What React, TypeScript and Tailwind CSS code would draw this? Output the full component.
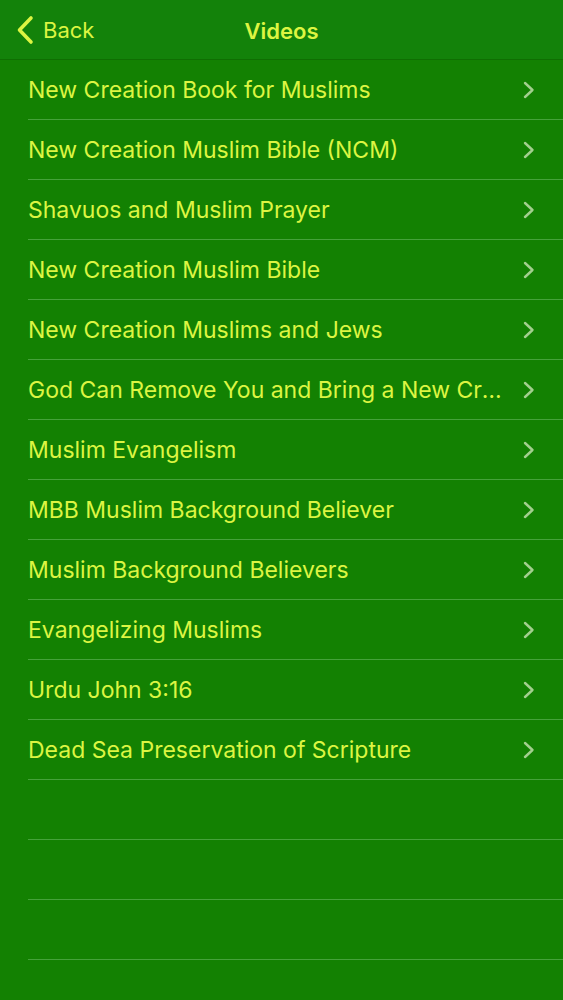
import React from "react";

const items = [
  "New Creation Book for Muslims",
  "New Creation Muslim Bible (NCM)",
  "Shavuos and Muslim Prayer",
  "New Creation Muslim Bible",
  "New Creation Muslims and Jews",
  "God Can Remove You and Bring a New Creation",
  "Muslim Evangelism",
  "MBB Muslim Background Believer",
  "Muslim Background Believers",
  "Evangelizing Muslims",
  "Urdu John 3:16",
  "Dead Sea Preservation of Scripture",
];

function Chevron() {
  return (
    <svg width="12" height="18" viewBox="0 0 12 18" fill="none">
      <path d="M2 2 L9.5 9 L2 16" stroke="#a3cf8e" strokeWidth="2.4" strokeLinecap="round" strokeLinejoin="round" />
    </svg>
  );
}

export default function App() {
  return (
    <div
      className="w-[563px] h-[1000px] overflow-hidden bg-[#138102] text-[#dcf542]"
      style={{ fontFamily: "Inter, 'Liberation Sans', sans-serif" }}
    >
      <div className="relative h-[60px] flex items-center border-b border-[#0f6e02] bg-[#13820a]">
        <div className="flex items-center pl-[16px] gap-[9px]">
          <svg width="18" height="30" viewBox="0 0 18 30" fill="none">
            <path d="M15 3 L3.5 15 L15 27" stroke="#dcf542" strokeWidth="3.6" strokeLinecap="round" strokeLinejoin="round" />
          </svg>
          <span className="text-[22px] leading-none">Back</span>
        </div>
        <div className="absolute inset-0 flex items-center justify-center pointer-events-none">
          <span className="text-[22px] font-semibold leading-none pt-[2px]">Videos</span>
        </div>
      </div>
      <div className="pl-[28px]">
        {items.map((t) => (
          <div key={t} className="h-[60px] flex items-center border-b border-[#45a23a] pr-[28px]">
            <span className="flex-1 min-w-0 truncate text-[23px] leading-[30px] pr-[20px]">{t}</span>
            <Chevron />
          </div>
        ))}
        {[0, 1, 2, 3].map((i) => (
          <div key={i} className="h-[60px] border-b border-[#45a23a]" />
        ))}
      </div>
    </div>
  );
}
